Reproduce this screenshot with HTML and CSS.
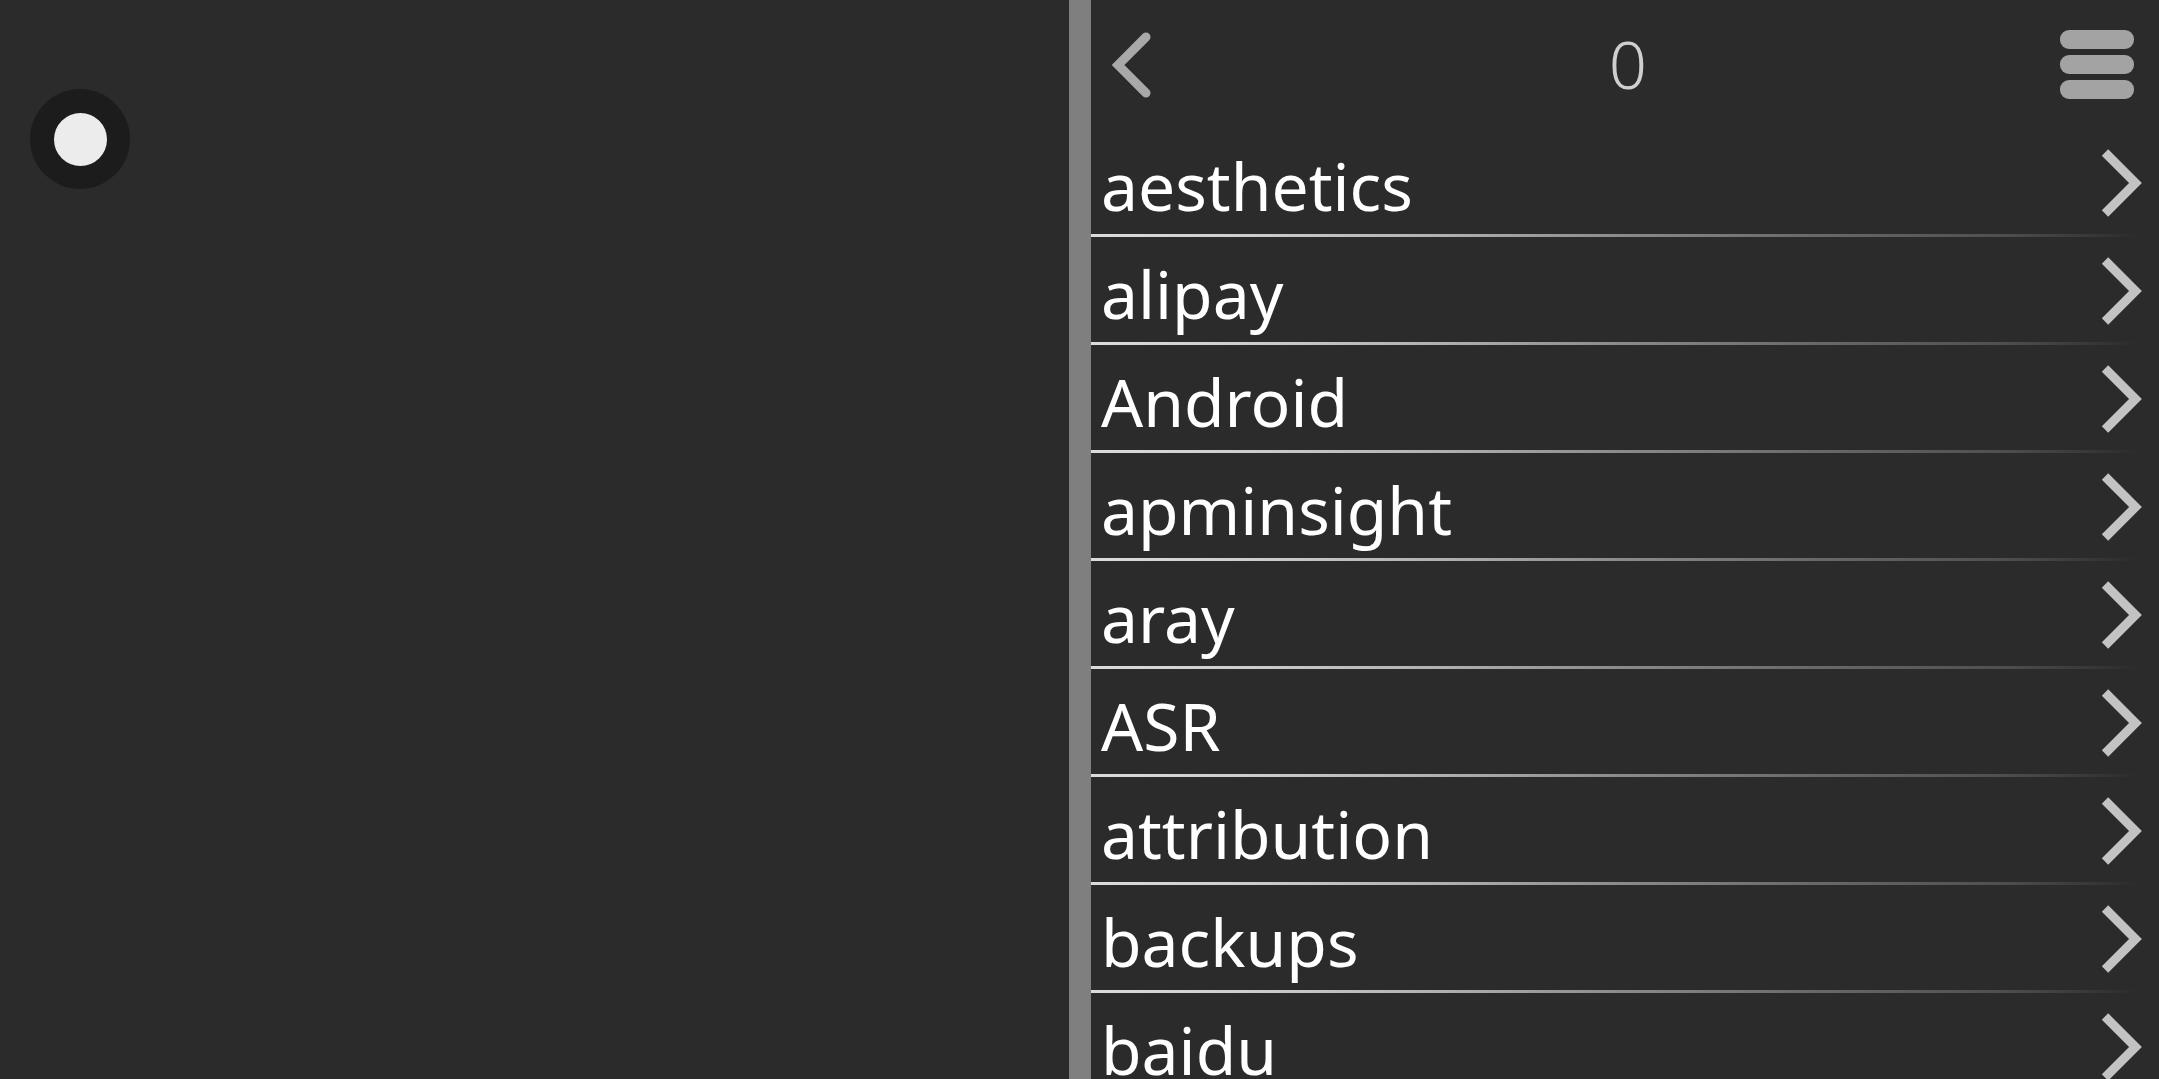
FILE: index.html
```html
<!DOCTYPE html>
<html>
<head>
<meta charset="utf-8">
<link rel="stylesheet" href="styles.css">
</head>
<body>
<div class="app">
  <div class="left">
    <div class="toggle"><div class="knob"></div></div>
  </div>
  <div class="divider"></div>
  <div class="right">
    <div class="header">
      <svg class="back" viewBox="0 0 40 66" width="40" height="66"><polyline points="34,5 6,33 34,61" fill="none" stroke="#a9a9a9" stroke-width="9" stroke-linecap="round" stroke-linejoin="miter"/></svg>
      <div class="count">0</div>
      <div class="menu"><span></span><span></span><span></span></div>
    </div>
    <ul class="list">
      <li class="row"><span class="label">aesthetics</span><svg class="chev" viewBox="0 0 42 68" width="42" height="68"><polyline points="5,3.5 35.5,34 5,64.5" fill="none" stroke="#c3c3c3" stroke-width="9" stroke-linejoin="miter"/></svg></li>
      <li class="row"><span class="label">alipay</span><svg class="chev" viewBox="0 0 42 68" width="42" height="68"><polyline points="5,3.5 35.5,34 5,64.5" fill="none" stroke="#c3c3c3" stroke-width="9" stroke-linejoin="miter"/></svg></li>
      <li class="row"><span class="label">Android</span><svg class="chev" viewBox="0 0 42 68" width="42" height="68"><polyline points="5,3.5 35.5,34 5,64.5" fill="none" stroke="#c3c3c3" stroke-width="9" stroke-linejoin="miter"/></svg></li>
      <li class="row"><span class="label">apminsight</span><svg class="chev" viewBox="0 0 42 68" width="42" height="68"><polyline points="5,3.5 35.5,34 5,64.5" fill="none" stroke="#c3c3c3" stroke-width="9" stroke-linejoin="miter"/></svg></li>
      <li class="row"><span class="label">aray</span><svg class="chev" viewBox="0 0 42 68" width="42" height="68"><polyline points="5,3.5 35.5,34 5,64.5" fill="none" stroke="#c3c3c3" stroke-width="9" stroke-linejoin="miter"/></svg></li>
      <li class="row"><span class="label">ASR</span><svg class="chev" viewBox="0 0 42 68" width="42" height="68"><polyline points="5,3.5 35.5,34 5,64.5" fill="none" stroke="#c3c3c3" stroke-width="9" stroke-linejoin="miter"/></svg></li>
      <li class="row"><span class="label">attribution</span><svg class="chev" viewBox="0 0 42 68" width="42" height="68"><polyline points="5,3.5 35.5,34 5,64.5" fill="none" stroke="#c3c3c3" stroke-width="9" stroke-linejoin="miter"/></svg></li>
      <li class="row"><span class="label">backups</span><svg class="chev" viewBox="0 0 42 68" width="42" height="68"><polyline points="5,3.5 35.5,34 5,64.5" fill="none" stroke="#c3c3c3" stroke-width="9" stroke-linejoin="miter"/></svg></li>
      <li class="row"><span class="label">baidu</span><svg class="chev" viewBox="0 0 42 68" width="42" height="68"><polyline points="5,3.5 35.5,34 5,64.5" fill="none" stroke="#c3c3c3" stroke-width="9" stroke-linejoin="miter"/></svg></li>
    </ul>
  </div>
</div>
</body>
</html>
```
FILE: styles.css
```css
html, body {
  margin: 0;
  padding: 0;
  background: #2b2b2b;
  overflow: hidden;
}
.app {
  display: flex;
  width: 2159px;
  height: 1079px;
  overflow: hidden;
  font-family: "Noto Sans", "Open Sans", sans-serif;
}
.left {
  width: 1069px;
  flex: none;
  padding: 89px 0 0 30px;
  box-sizing: border-box;
}
.toggle {
  width: 100px;
  height: 100px;
  border-radius: 50%;
  background: #1c1c1c;
  display: flex;
  align-items: center;
  justify-content: center;
}
.knob {
  width: 53px;
  height: 53px;
  border-radius: 50%;
  background: #ececec;
}
.divider {
  width: 22px;
  flex: none;
  background: #7f7f7f;
}
.right {
  flex: 1;
  display: flex;
  flex-direction: column;
  min-width: 0;
}
.header {
  height: 129px;
  flex: none;
  display: grid;
  grid-template-columns: 1fr auto 1fr;
  align-items: center;
  padding: 0 25px 0 21px;
}
.back {
  display: block;
  justify-self: start;
}
.count {
  font-size: 67px;
  font-weight: 300;
  line-height: 1;
  color: #cfcfcf;
  padding: 0 0 2px 10px;
}
.menu {
  justify-self: end;
  display: flex;
  flex-direction: column;
  gap: 6px;
  width: 74px;
}
.menu span {
  display: block;
  height: 19px;
  border-radius: 9px;
  background: #a3a3a3;
}
.list {
  list-style: none;
  margin: 0;
  padding: 0;
}
.row {
  height: 108px;
  box-sizing: border-box;
  display: flex;
  align-items: center;
  justify-content: space-between;
  padding: 0 17px 0 10px;
  border-bottom: 3px solid transparent;
  border-image: linear-gradient(to right, #dcdcdc 0%, #cdcdcd 15%, #b0b0b0 33%, #8a8a8a 50%, #6a6a6a 67%, #505050 85%, rgba(80,80,80,0) 98%) 1;
}
.label {
  font-size: 66px;
  line-height: 99px;
  padding-top: 7px;
  color: #ffffff;
  white-space: nowrap;
}
.chev {
  display: block;
  flex: none;
  margin-top: 2px;
}
```
